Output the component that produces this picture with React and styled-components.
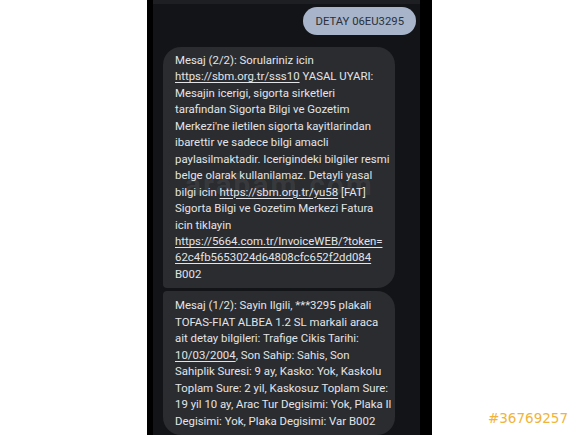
import React from 'react';
import styled, { createGlobalStyle } from 'styled-components';

const GlobalStyle = createGlobalStyle`
  html, body {
    margin: 0;
    padding: 0;
    background: #ffffff;
  }
`;

const Page = styled.div`
  position: relative;
  width: 580px;
  height: 435px;
  overflow: hidden;
  display: flex;
  background: #ffffff;
  font-family: Roboto, "Noto Sans", sans-serif;
`;

const Phone = styled.div`
  margin-left: 147px;
  width: 285px;
  height: 100%;
  background: #000000;
  padding: 0 12px 0 6px;
  box-sizing: border-box;
  display: flex;
`;

const Screen = styled.div`
  position: relative;
  flex: 1;
  background: #121418;
  display: flex;
  flex-direction: column;
  overflow: hidden;
`;

const TopBar = styled.div`
  height: 4px;
  background: #1d1f23;
  flex-shrink: 0;
`;

const Thread = styled.div`
  display: flex;
  flex-direction: column;
  padding: 3px 4px 0 10px;
`;

const SentRow = styled.div`
  display: flex;
  justify-content: flex-end;
  margin-bottom: 12px;
`;

const SentBubble = styled.div`
  height: 28px;
  padding: 0 12px;
  border-radius: 14px;
  background: #a8b4c9;
  color: #2a303a;
  font-size: 11.3px;
  display: flex;
  align-items: center;
`;

const Received = styled.div`
  width: 232px;
  box-sizing: border-box;
  background: #2a2c30;
  color: #e3e4e7;
  font-size: 11.4px;
  line-height: 16.46px;
  padding: ${p => (p.$first ? '5px 8px 6px 12px' : '6px 8px 6px 12px')};
  border-radius: ${p => (p.$first ? '18px 18px 18px 4px' : '4px 18px 18px 18px')};
  margin-bottom: 3px;
`;

const Line = styled.span`
  display: block;
  white-space: nowrap;
`;

const Link = styled.span`
  text-decoration: underline;
  text-underline-offset: 2px;
`;

const Watermark = styled.div`
  position: absolute;
  left: 32px;
  top: 167px;
  font-size: 30px;
  font-weight: 700;
  letter-spacing: 2px;
  color: rgba(255, 255, 255, 0.07);
  pointer-events: none;
`;

const AdNumber = styled.div`
  position: absolute;
  right: 12px;
  bottom: 9px;
  font-family: "DejaVu Sans", sans-serif;
  font-size: 13.5px;
  color: #f0b43c;
`;

export default function App() {
  return (
    <>
      <GlobalStyle />
      <Page>
        <Phone>
          <Screen>
            <TopBar />
            <Thread>
              <SentRow>
                <SentBubble>DETAY 06EU3295</SentBubble>
              </SentRow>
              <Received $first>
                <Line>Mesaj (2/2): Sorulariniz icin</Line>
                <Line><Link>https://sbm.org.tr/sss10</Link> YASAL UYARI:</Line>
                <Line>Mesajin icerigi, sigorta sirketleri</Line>
                <Line>tarafindan Sigorta Bilgi ve Gozetim</Line>
                <Line>Merkezi'ne iletilen sigorta kayitlarindan</Line>
                <Line>ibarettir ve sadece bilgi amacli</Line>
                <Line>paylasilmaktadir. Icerigindeki bilgiler resmi</Line>
                <Line>belge olarak kullanilamaz. Detayli yasal</Line>
                <Line>bilgi icin <Link>https://sbm.org.tr/yu58</Link> [FAT]</Line>
                <Line>Sigorta Bilgi ve Gozetim Merkezi Fatura</Line>
                <Line>icin tiklayin</Line>
                <Line><Link>https://5664.com.tr/InvoiceWEB/?token=</Link></Line>
                <Line><Link>62c4fb5653024d64808cfc652f2dd084</Link></Line>
                <Line>B002</Line>
              </Received>
              <Received>
                <Line>Mesaj (1/2): Sayin Ilgili, ***3295 plakali</Line>
                <Line>TOFAS-FIAT ALBEA 1.2 SL markali araca</Line>
                <Line>ait detay bilgileri: Trafige Cikis Tarihi:</Line>
                <Line><Link>10/03/2004</Link>, Son Sahip: Sahis, Son</Line>
                <Line>Sahiplik Suresi: 9 ay, Kasko: Yok, Kaskolu</Line>
                <Line>Toplam Sure: 2 yil, Kaskosuz Toplam Sure:</Line>
                <Line>19 yil 10 ay, Arac Tur Degisimi: Yok, Plaka Il</Line>
                <Line>Degisimi: Yok, Plaka Degisimi: Var B002</Line>
              </Received>
            </Thread>
            <Watermark>arabam.com</Watermark>
          </Screen>
        </Phone>
        <AdNumber>#36769257</AdNumber>
      </Page>
    </>
  );
}
